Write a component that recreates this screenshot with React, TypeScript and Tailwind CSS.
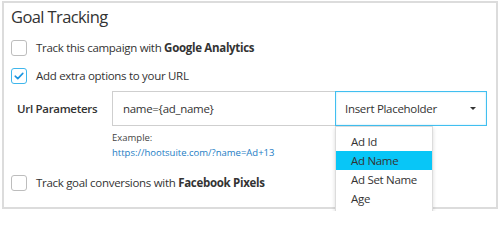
import React from 'react';

const font = { fontFamily: '"Open Sans", "Noto Sans", sans-serif' };

function Checkbox({ checked }: { checked?: boolean }) {
  return (
    <span
      className={
        'flex h-[16px] w-[16px] shrink-0 items-center justify-center rounded-[3px] border bg-white ' +
        (checked ? 'border-[#3fb6ec]' : 'border-[#bdbdbd]')
      }
    >
      {checked && (
        <svg width="10" height="8" viewBox="0 0 10 8" fill="none">
          <path d="M1.2 4.2 L3.8 6.6 L8.8 1.4" stroke="#1b95e0" strokeWidth="1.6" strokeLinecap="round" strokeLinejoin="round" />
        </svg>
      )}
    </span>
  );
}

function CheckRow({ checked, children }: { checked?: boolean; children: React.ReactNode }) {
  return (
    <div className="flex h-[28px] items-center gap-[9px]">
      <Checkbox checked={checked} />
      <span className="whitespace-nowrap text-[11.5px] tracking-[-0.3px] text-[#333]">{children}</span>
    </div>
  );
}

const placeholders = ['Ad Id', 'Ad Name', 'Ad Set Name', 'Age'];

export default function App() {
  return (
    <div className="h-[211px] w-[500px] overflow-hidden bg-white pl-[2px] pt-px" style={font}>
      <div className="h-[208px] w-[496px] border-2 border-[#dcdcdc] px-[7px]">
        <h2 className="flex h-[28px] items-center text-[16.5px] font-normal tracking-[-0.6px] text-[#333]">
          Goal Tracking
        </h2>
        <div className="mt-[3px]">
          <CheckRow>
            Track this campaign with <span className="font-bold">Google Analytics</span>
          </CheckRow>
          <CheckRow checked>Add extra options to your URL</CheckRow>
        </div>

        {/* Url parameters */}
        <div className="mt-px flex h-[35px] items-stretch text-[11.5px] tracking-[-0.3px] text-[#333]">
          <label className="flex w-[101px] items-center whitespace-nowrap pl-[6px] font-semibold">
            Url Parameters
          </label>
          <div className="flex w-[224px] items-center border border-[#cfcfcf] pl-[10px]">
            name=&#123;ad_name&#125;
          </div>
          <div className="relative -ml-px flex w-[152px] items-center justify-between border border-[#41bff0] pl-[9px] pr-[10px] shadow-[inset_0_0_2px_rgba(65,191,240,0.4)]">
            <span className="whitespace-nowrap">Insert Placeholder</span>
            <svg width="6" height="3" viewBox="0 0 6 3">
              <path d="M0 0 H6 L3 3 Z" fill="#333" />
            </svg>
            <ul className="absolute left-[-1px] top-[34px] z-10 w-[98px] border border-[#dcdcdc] bg-white pt-[5px] shadow-[0_2px_4px_rgba(0,0,0,0.15)]">
              {placeholders.map((p) => (
                <li
                  key={p}
                  className={
                    'flex h-[19px] items-center whitespace-nowrap pl-[15px] ' +
                    (p === 'Ad Name' ? 'bg-[#08c6f7]' : '')
                  }
                >
                  {p}
                </li>
              ))}
              <li className="h-[19px]" />
            </ul>
          </div>
        </div>

        <div className="ml-[101px] mt-[4px] text-[9.5px] leading-[15px]">
          <div className="text-[#444]">Example:</div>
          <div className="text-[#1b7cc4]">https://hootsuite.com/?name=Ad+13</div>
        </div>

        <div className="mt-[9px]">
          <CheckRow>
            Track goal conversions with <span className="font-bold">Facebook Pixels</span>
          </CheckRow>
        </div>
      </div>
    </div>
  );
}
